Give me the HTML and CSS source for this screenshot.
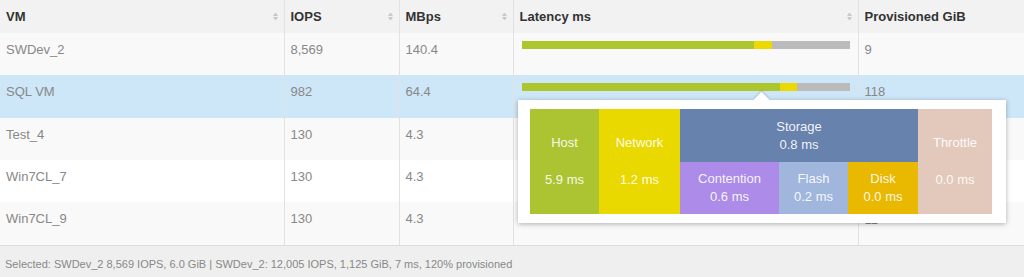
FILE: index.html
```html
<!DOCTYPE html>
<html lang="en">
<head>
  <meta charset="UTF-8" />
  <title>VM Latency</title>
  <link rel="stylesheet" href="styles.css">
</head>
<body>

  <div class="grid-wrap">
    <table class="vm-table">
      <colgroup>
        <col class="c-vm">
        <col class="c-iops">
        <col class="c-mbps">
        <col class="c-lat">
        <col class="c-prov">
      </colgroup>
      <thead>
        <tr>
          <th><div class="th-in"><span>VM</span><i class="sort"></i></div></th>
          <th><div class="th-in"><span>IOPS</span><i class="sort"></i></div></th>
          <th><div class="th-in"><span>MBps</span><i class="sort"></i></div></th>
          <th><div class="th-in"><span>Latency ms</span><i class="sort"></i></div></th>
          <th><div class="th-in"><span>Provisioned GiB</span></div></th>
        </tr>
      </thead>
      <tbody>
        <tr>
          <td>SWDev_2</td>
          <td>8,569</td>
          <td>140.4</td>
          <td class="lat">
            <div class="bar">
              <span class="host" style="width:232px"></span><span class="net" style="width:18px"></span><span class="rest"></span>
            </div>
          </td>
          <td>9</td>
        </tr>
        <tr class="selected">
          <td>SQL VM</td>
          <td>982</td>
          <td>64.4</td>
          <td class="lat">
            <div class="bar">
              <span class="host" style="width:258px"></span><span class="net" style="width:17px"></span><span class="rest"></span>
            </div>
          </td>
          <td>118</td>
        </tr>
        <tr>
          <td>Test_4</td>
          <td>130</td>
          <td>4.3</td>
          <td class="lat"></td>
          <td></td>
        </tr>
        <tr>
          <td>Win7CL_7</td>
          <td>130</td>
          <td>4.3</td>
          <td class="lat"></td>
          <td></td>
        </tr>
        <tr>
          <td>Win7CL_9</td>
          <td>130</td>
          <td>4.3</td>
          <td class="lat"></td>
          <td class="peek">11</td>
        </tr>
      </tbody>
    </table>

    <div class="tip">
      <div class="breakdown">
        <div class="seg host tall"><span>Host</span><span>5.9 ms</span></div>
        <div class="seg net tall"><span>Network</span><span>1.2 ms</span></div>
        <div class="seg storage"><span>Storage</span><span>0.8 ms</span></div>
        <div class="seg throttle tall"><span>Throttle</span><span>0.0 ms</span></div>
        <div class="seg contention"><span>Contention</span><span>0.6 ms</span></div>
        <div class="seg flash"><span>Flash</span><span>0.2 ms</span></div>
        <div class="seg disk"><span>Disk</span><span>0.0 ms</span></div>
      </div>
    </div>
  </div>

  <div class="status">Selected: SWDev_2 8,569 IOPS, 6.0 GiB | SWDev_2: 12,005 IOPS, 1,125 GiB, 7 ms, 120% provisioned</div>

</body>
</html>
```

FILE: styles.css
```css
body {
  margin: 0;
  font-family: 'Liberation Sans', Arial, sans-serif;
  font-size: 13px;
  color: #888;
  background: #fff;
  overflow: hidden;
}

.grid-wrap {
  position: relative;
  height: 245px;
  overflow: hidden;
}

.vm-table {
  border-collapse: collapse;
  table-layout: fixed;
  width: 1024px;
}

.c-vm { width: 284px; }
.c-iops { width: 115px; }
.c-mbps { width: 114px; }
.c-lat { width: 345px; }
.c-prov { width: 166px; }

.vm-table th {
  background: #f2f2f2;
  color: #333;
  font-weight: bold;
  text-align: left;
  height: 33px;
  padding: 0 6px 0 6px;
  border-left: 1px solid #e2e2e2;
}

.vm-table th:first-child,
.vm-table td:first-child {
  border-left: none;
}

.th-in {
  display: flex;
  align-items: center;
  justify-content: space-between;
}

.sort {
  display: flex;
  flex-direction: column;
  gap: 1px;
  width: 5px;
}

.sort::before,
.sort::after {
  content: '';
  border-left: 2.5px solid transparent;
  border-right: 2.5px solid transparent;
}

.sort::before {
  border-bottom: 3px solid #c9c9c9;
}

.sort::after {
  border-top: 3px solid #c9c9c9;
}

.vm-table td {
  height: 42px;
  padding: 9px 6px 0 6px;
  vertical-align: top;
  line-height: 16px;
  box-sizing: border-box;
  border-left: 1px solid #e2e2e2;
}

.vm-table tbody tr:nth-child(odd) td {
  background: #f9f9f9;
}

.vm-table tbody tr:nth-child(even) td {
  background: #fff;
}

.vm-table tbody tr.selected td {
  background: #cde6f8;
  height: 43px;
}

.vm-table tbody tr:last-child td {
  height: 43px;
}

.vm-table td.peek {
  padding-top: 10px;
}

.vm-table td.lat {
  padding: 8px 7px 0 8px;
}

.bar {
  display: flex;
  height: 8px;
  width: 328px;
}

.bar .host { background: #aec62e; }
.bar .net { background: #ebd900; }
.bar .rest { flex: 1; background: #bbb; }

.tip {
  position: absolute;
  left: 518px;
  top: 100px;
  width: 488px;
  height: 123px;
  box-sizing: border-box;
  padding: 9px 14px 9px 12px;
  background: #fff;
  box-shadow: 0 1px 5px rgba(0, 0, 0, 0.3);
}

.tip::before {
  content: '';
  position: absolute;
  left: 238px;
  top: -6px;
  width: 11px;
  height: 11px;
  background: #fff;
  transform: rotate(45deg);
  box-shadow: -1px -1px 2px rgba(0, 0, 0, 0.15);
}

.breakdown {
  position: relative;
  display: grid;
  grid-template-columns: 69px 81px 99px 69px 70px 74px;
  grid-template-rows: 53px 52px;
}

.seg {
  display: flex;
  flex-direction: column;
  align-items: center;
  justify-content: center;
  color: rgba(255, 255, 255, 0.92);
  line-height: 18px;
}

.seg.tall {
  grid-row: 1 / 3;
  gap: 19px;
}

.seg.host { background: #adc432; }
.seg.net { background: #e9d900; }
.seg.storage { grid-column: 3 / 6; background: #6882ae; }
.seg.throttle { grid-column: 6; background: #e3c9bc; }
.seg.contention { grid-column: 3; grid-row: 2; background: #ac8be9; }
.seg.flash { grid-column: 4; grid-row: 2; background: #a0b6dd; }
.seg.disk { grid-column: 5; grid-row: 2; background: #e9b800; }

.status {
  height: 32px;
  box-sizing: border-box;
  border-top: 1px solid #dcdcdc;
  background: #efefef;
  padding: 0 5px;
  font-size: 11px;
  line-height: 36px;
}
```
